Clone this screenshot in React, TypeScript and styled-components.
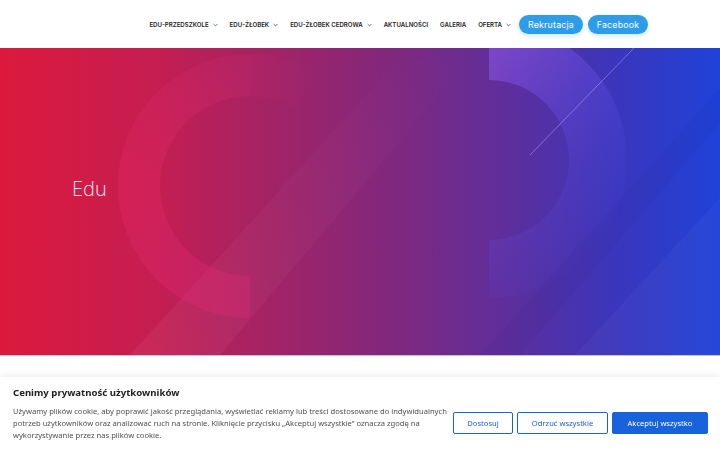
import React from "react";
import styled, { createGlobalStyle } from "styled-components";

const Global = createGlobalStyle`
  html, body { margin: 0; padding: 0; background: #fff; }
  body { font-family: "Open Sans", "Liberation Sans", sans-serif; overflow: hidden; }
  * { box-sizing: border-box; }
`;

const Header = styled.header`
  height: 48px;
  display: flex;
  align-items: center;
  justify-content: flex-end;
  padding-right: 72px;
  background: #fff;
`;

const Nav = styled.nav`
  display: flex;
  align-items: center;
  gap: 12px;
`;

const NavItem = styled.a`
  display: flex;
  align-items: center;
  gap: 4px;
  font-family: Inter, "Noto Sans", sans-serif;
  font-size: 6.1px;
  font-weight: 600;
  color: #1e1e1e;
  text-transform: uppercase;
  white-space: nowrap;
`;

const Chevron = styled.svg`
  width: 5px;
  height: 4px;
  margin-top: 1px;
`;

const Pill = styled.a<{ w: number }>`
  display: inline-flex;
  align-items: center;
  justify-content: center;
  height: 19px;
  width: ${(p) => p.w}px;
  border-radius: 10px;
  background: #2e9de9;
  color: #fff;
  font-family: Inter, "Noto Sans", sans-serif;
  font-size: 8.8px;
  font-weight: 400;
  letter-spacing: 0.2px;
  box-shadow: 0 2px 4px rgba(46, 157, 233, 0.25);
`;

const Buttons = styled.div`
  display: flex;
  gap: 5px;
  margin-left: -4px;
`;

const Hero = styled.section`
  position: relative;
  height: 308px;
  overflow: hidden;
  background: linear-gradient(90deg, #dc193c 0%, #c41e52 22%, #a22366 38%, #80287f 55%, #5a2f9f 72%, #3a36bd 86%, #1f42d9 100%);
  border-bottom: 1px solid #c6bfd6;
`;

const Deco = styled.svg`
  position: absolute;
  inset: 0;
  width: 720px;
  height: 307px;
`;

const HeroInner = styled.div`
  position: relative;
  padding: 127px 0 0 72px;
`;

const HeroTitle = styled.h1`
  margin: 0;
  font-family: "Open Sans", sans-serif;
  font-weight: 300;
  font-size: 20px;
  line-height: 28px;
  color: #fbe6ef;
`;

const Banner = styled.div`
  position: fixed;
  left: 0;
  right: 0;
  top: 377px;
  height: 80px;
  background: #fff;
  box-shadow: 0 -2px 6px rgba(0, 0, 0, 0.07);
  display: flex;
  align-items: flex-start;
  padding: 9px 12px 0 13px;
`;

const BannerText = styled.div`
  flex: 1;
  min-width: 0;
`;

const BannerTitle = styled.div`
  font-family: "Noto Sans", sans-serif;
  font-weight: 700;
  font-size: 9.6px;
  color: #212121;
  line-height: 14px;
  margin-bottom: 5px;
`;

const BannerBody = styled.p`
  margin: 0;
  font-family: "Noto Sans", sans-serif;
  font-size: 7.6px;
  line-height: 12px;
  color: #4f4f4f;
  width: 452px;
`;

const Actions = styled.div`
  display: flex;
  flex-shrink: 0;
  gap: 4px;
  margin-top: 26px;
`;

const CookieBtn = styled.button<{ primary?: boolean; w: number }>`
  width: ${(p) => p.w}px;
  height: 22px;
  border: 1.5px solid #1863dc;
  background: ${(p) => (p.primary ? "#1863dc" : "#fff")};
  color: ${(p) => (p.primary ? "#fff" : "#1863dc")};
  font-family: "Noto Sans", sans-serif;
  font-size: 7.6px;
  padding: 0;
  border-radius: 2px;
`;

const Chev = () => (
  <Chevron viewBox="0 0 5 4">
    <path d="M0.6 1 L2.5 2.9 L4.4 1" fill="none" stroke="#555" strokeWidth="0.8" />
  </Chevron>
);

export default function App() {
  return (
    <>
      <Global />
      <Header>
        <Nav>
          <NavItem>EDU-PRZEDSZKOLE <Chev /></NavItem>
          <NavItem>EDU-ŻŁOBEK <Chev /></NavItem>
          <NavItem>EDU-ŻŁOBEK CEDROWA <Chev /></NavItem>
          <NavItem>AKTUALNOŚCI</NavItem>
          <NavItem>GALERIA</NavItem>
          <NavItem>OFERTA <Chev /></NavItem>
          <Buttons>
            <Pill w={64}>Rekrutacja</Pill>
            <Pill w={60}>Facebook</Pill>
          </Buttons>
        </Nav>
      </Header>
      <Hero>
        <Deco viewBox="0 0 720 307">
          <defs>
            <linearGradient id="lr" x1="0.2" y1="0" x2="0.2" y2="1">
              <stop offset="0" stopColor="#e8307a" stopOpacity="0.12" />
              <stop offset="0.45" stopColor="#ea2a6a" stopOpacity="0.3" />
              <stop offset="1" stopColor="#e6287a" stopOpacity="0.3" />
            </linearGradient>
            <linearGradient id="lrTop" x1="0" y1="0" x2="1" y2="0">
              <stop offset="0" stopColor="#e8307a" stopOpacity="0.12" />
              <stop offset="1" stopColor="#e8307a" stopOpacity="0" />
            </linearGradient>
            <linearGradient id="rr" x1="0" y1="0" x2="0.5" y2="1">
              <stop offset="0" stopColor="#9a5cf0" stopOpacity="0.6" />
              <stop offset="0.55" stopColor="#6a55ee" stopOpacity="0.25" />
              <stop offset="1" stopColor="#5050f0" stopOpacity="0" />
            </linearGradient>
            <linearGradient id="band" x1="0" y1="1" x2="1" y2="0">
              <stop offset="0" stopColor="#ffffff" stopOpacity="0.05" />
              <stop offset="1" stopColor="#ffffff" stopOpacity="0" />
            </linearGradient>
          </defs>
          <polygon points="130,307 400,10 470,10 220,307" fill="url(#band)" />
          <polygon points="575,307 720,150 720,307" fill="#ffffff" opacity="0.03" />
          <polygon points="480,307 720,40 720,75 520,307" fill="#000030" opacity="0.03" />
          <path d="M250 6 A132 132 0 0 0 250 270 L250 228 A90 90 0 0 1 250 48 Z" fill="url(#lr)" />
          <path d="M250 6 A132 132 0 0 1 316 24 L295 60 A90 90 0 0 0 250 48 Z" fill="url(#lrTop)" />
          <path d="M489 -26 A138 138 0 0 1 489 250 L489 192 A80 80 0 0 0 489 32 Z" fill="url(#rr)" />
          <line x1="530" y1="107" x2="634" y2="0" stroke="#c9b8ff" strokeOpacity="0.45" strokeWidth="1" />
        </Deco>
        <HeroInner>
          <HeroTitle>Edu</HeroTitle>
        </HeroInner>
      </Hero>
      <Banner>
        <BannerText>
          <BannerTitle>Cenimy prywatność użytkowników</BannerTitle>
          <BannerBody>
            Używamy plików cookie, aby poprawić jakość przeglądania, wyświetlać reklamy lub treści dostosowane do indywidualnych potrzeb użytkowników oraz analizować ruch na stronie. Kliknięcie przycisku „Akceptuj wszystkie” oznacza zgodę na wykorzystywanie przez nas plików cookie.
          </BannerBody>
        </BannerText>
        <Actions>
          <CookieBtn w={60}>Dostosuj</CookieBtn>
          <CookieBtn w={91}>Odrzuć wszystkie</CookieBtn>
          <CookieBtn w={96} primary>Akceptuj wszystko</CookieBtn>
        </Actions>
      </Banner>
    </>
  );
}
